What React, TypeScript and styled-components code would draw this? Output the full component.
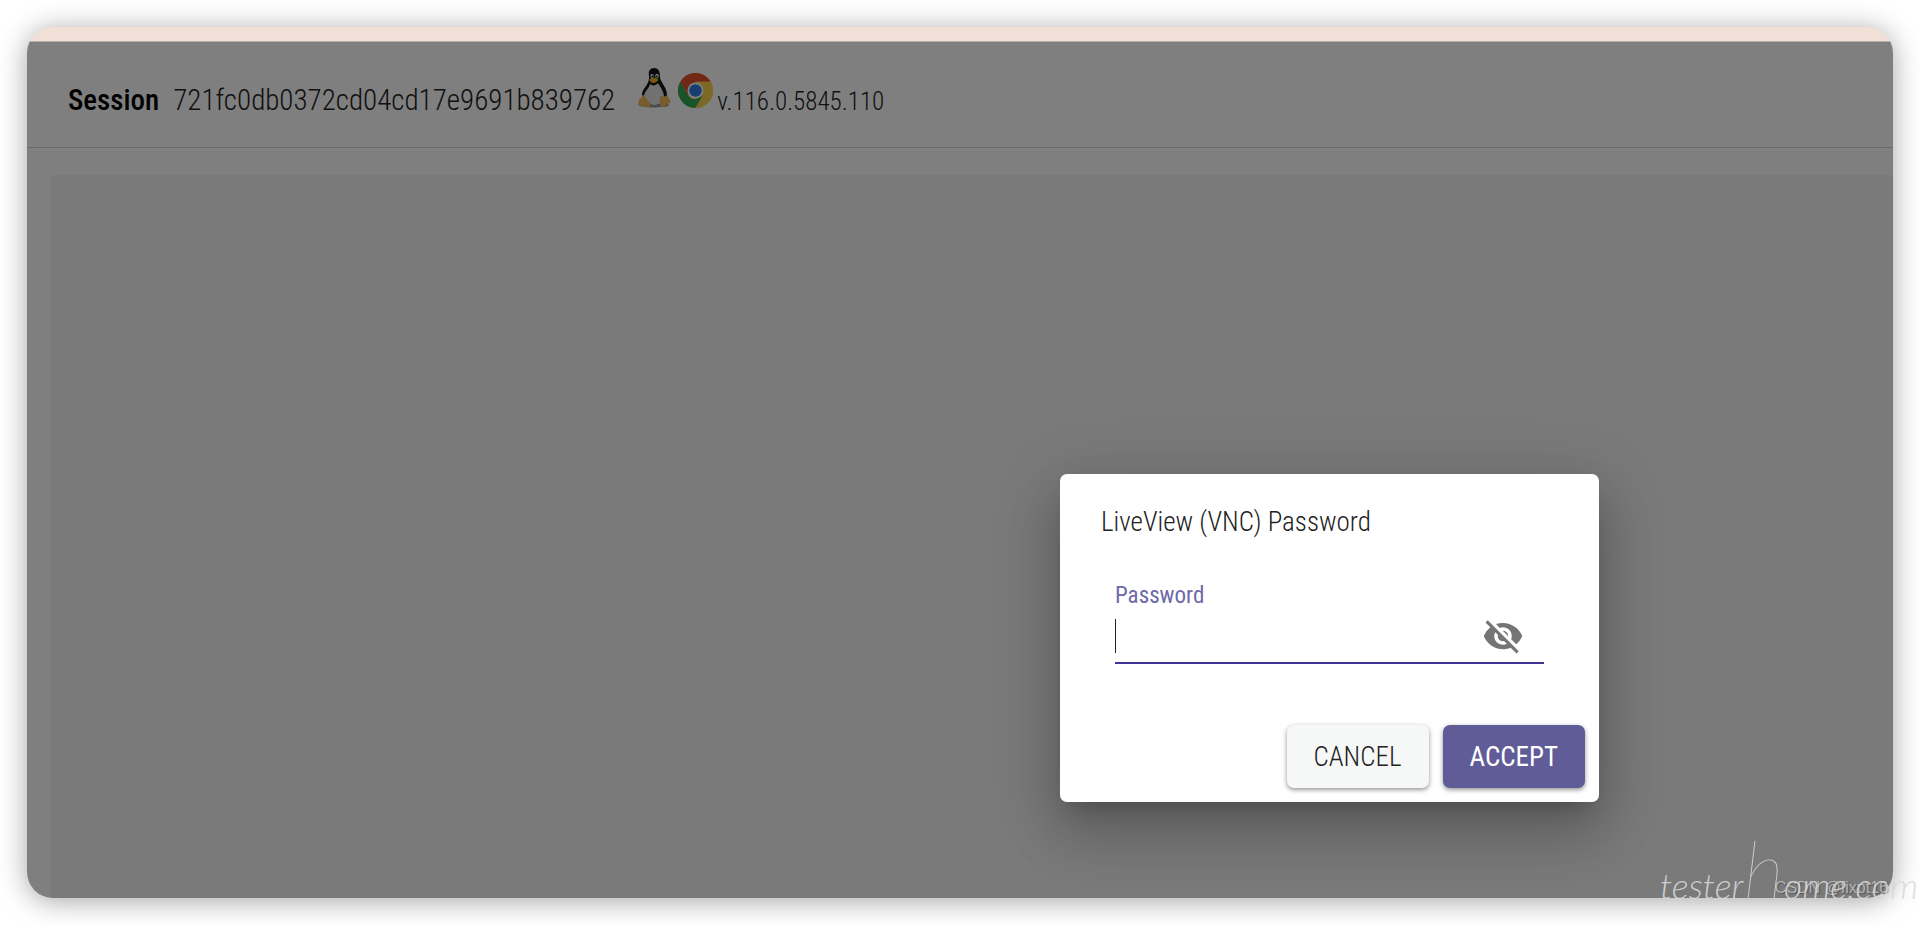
import React from "react";
import styled, { createGlobalStyle } from "styled-components";
import { MdVisibilityOff } from "react-icons/md";

const GlobalStyle = createGlobalStyle`
  *, *::before, *::after { box-sizing: border-box; }
  body {
    margin: 0;
    background: #fff;
    color: #000;
    font-family: "Roboto Condensed", "Liberation Sans", sans-serif;
    font-weight: 300;
  }
`;

const Page = styled.div`
  position: relative;
  display: flex;
  min-height: 100vh;
  padding: 27px;
  overflow: hidden;
`;

const Frame = styled.div`
  flex: 1;
  display: flex;
  flex-direction: column;
  border-radius: 26px;
  overflow: hidden;
  background: #f1dfd8;
  box-shadow: 0 3px 28px rgba(0, 0, 0, 0.36);
`;

const TopBand = styled.div`
  height: 15px;
  border-bottom: 1px solid #b9b0ad;
`;

const Workspace = styled.div`
  position: relative;
  flex: 1;
  display: flex;
  flex-direction: column;
  background: #fff;
`;

const Header = styled.header`
  display: flex;
  align-items: baseline;
  height: 106px;
  padding: 38px 41px 0;
  border-bottom: 1px solid #d4d4d4;
  line-height: 40px;
`;

const SessionTitle = styled.h1`
  margin: 0 14px 0 0;
  font-size: 29px;
  font-weight: 500;
`;

const SessionId = styled.span`
  margin-right: 22px;
  color: #222;
  font-size: 29px;
`;

const Platform = styled.span`
  display: flex;
  align-items: flex-end;
  align-self: flex-start;
  gap: 7px;
  margin: -12px 4px 0 0;
`;

const Version = styled.span`
  color: #222;
  font-size: 25px;
`;

const Screen = styled.main`
  flex: 1;
  margin: 27px 0 0 24px;
  background: #f5f5f5;
`;

const Backdrop = styled.div`
  position: absolute;
  inset: 0;
  display: flex;
  align-items: flex-end;
  justify-content: flex-end;
  padding: 0 294px 96px 0;
  background: rgba(0, 0, 0, 0.5);
`;

const Dialog = styled.form`
  display: flex;
  flex-direction: column;
  width: 539px;
  border-radius: 7px;
  background: #fff;
  box-shadow:
    0 15px 21px -10px rgba(0, 0, 0, 0.2),
    0 33px 53px 4px rgba(0, 0, 0, 0.14),
    0 12px 64px 11px rgba(0, 0, 0, 0.12);
`;

const DialogTitle = styled.h2`
  margin: 0;
  padding: 28px 41px;
  color: #222;
  font-size: 27px;
  font-weight: 300;
  line-height: 40px;
`;

const Field = styled.div`
  margin: 0 55px;
  padding-top: 12px;
`;

const FieldLabel = styled.label`
  display: block;
  color: #6d69a8;
  font-size: 23px;
  line-height: 28px;
  font-weight: 400;
`;

const InputRow = styled.div`
  display: flex;
  align-items: center;
  height: 54px;
  padding-right: 20px;
  border-bottom: 2px solid #3f3599;
`;

const Caret = styled.span`
  width: 1px;
  height: 34px;
  background: #222;
`;

const PasswordInput = styled.input`
  flex: 1;
  min-width: 0;
  padding: 0;
  border: 0;
  outline: 0;
  background: transparent;
  font: inherit;
  font-size: 27px;
`;

const IconButton = styled.button`
  display: flex;
  padding: 0;
  border: 0;
  background: none;
  color: #757575;
  cursor: pointer;
`;

const Actions = styled.div`
  display: flex;
  justify-content: flex-end;
  gap: 14px;
  padding: 61px 14px 14px;
`;

const ActionButton = styled.button<{ $primary?: boolean }>`
  height: 63px;
  padding: 0 27px;
  border: 0;
  border-radius: 7px;
  background: ${(p) => (p.$primary ? "#605c98" : "#f6f8f8")};
  color: ${(p) => (p.$primary ? "#fff" : "#222")};
  font: ${(p) => (p.$primary ? 400 : 300)} 27px "Roboto Condensed", "Liberation Sans", sans-serif;
  box-shadow: 0 2px 4px rgba(0, 0, 0, 0.35), 0 1px 7px rgba(0, 0, 0, 0.1);
  cursor: pointer;
`;

const Watermark = styled.div`
  position: absolute;
  right: 2px;
  bottom: 15px;
  color: rgba(216, 216, 216, 0.9);
  font: italic 300 36px/50px Lato, sans-serif;
  white-space: nowrap;
`;

const TallLetter = styled.span`
  font-size: 80px;
  font-weight: 100;
`;

const Credit = styled.div`
  position: absolute;
  right: 32px;
  bottom: 27px;
  color: #b4b4b4;
  font: 16px/20px "Liberation Sans", sans-serif;
  text-shadow: 1px 1px 1px #555;
`;

function Penguin() {
  return (
    <svg width="34" height="40" viewBox="0 0 34 40" aria-label="Linux">
      <ellipse cx="17" cy="37" rx="15" ry="2.500" fill="#999" />
      <path d="M12 8C11 3 13 0 17 0c5 0 6 4 6 9 0 5 7 10 7 18 0 6-3 10-13 10S5 34 5 27c0-7 8-10 7-19z" fill="#151515" />
      <path d="M13 16c2 2 6 2 8-1 2 4 6 8 6 14 0 6-4 8-10 8s-10-3-10-8c0-6 5-8 6-13z" fill="#e2e2e2" />
      <ellipse cx="15" cy="8" rx="1.600" ry="2.200" fill="#ccc" />
      <ellipse cx="20" cy="8" rx="1.900" ry="2.300" fill="#ccc" />
      <circle cx="15.300" cy="8.500" r=".8" />
      <circle cx="19.700" cy="8.500" r=".8" />
      <path d="M12.500 11.500c2-2.500 6-2.500 9 0-1 2-3 3.500-5 3.500s-4-1.500-4-3.500z" fill="#efb22a" />
      <path d="M6 27c2 0 4 5 7 8 1 3-1 5-4 4-3-1-8-1-8-3 0-1 1-2 1-4 1-2 2-1 2-2 1-1 1-3 2-3z" fill="#f0b85c" />
      <path d="M23 29c1-2 5 1 7-2 1 0 1 3 4 6 0 2-4 3-6 5-2 2-5 1-5-1-1-3 0-5 0-8z" fill="#f0b85c" />
    </svg>
  );
}

function Chrome() {
  return (
    <svg width="35" height="35" viewBox="0 0 48 48" aria-label="Chrome">
      <circle cx="24" cy="24" r="24" fill="#fbd04b" />
      <path d="M24 24 13.600 30 3.200 12A24 24 0 0 1 44.800 12H24z" fill="#e2502f" />
      <path d="M3.200 12 13.600 30A12 12 0 0 0 24 36l10.400-6L24 48A24 24 0 0 1 3.200 12z" fill="#35a452" />
      <path d="M24 12h20.800A24 24 0 0 1 24 48l10.400-18A12 12 0 0 0 24 12z" fill="#fbd04b" />
      <circle cx="24" cy="24" r="11" fill="#fff" />
      <circle cx="24" cy="24" r="8.500" fill="#2f7de1" />
    </svg>
  );
}

export default function App() {
  const [visible, setVisible] = React.useState(false);
  const [password, setPassword] = React.useState("");
  return (
    <>
      <GlobalStyle />
      <Page>
        <Frame>
          <TopBand />
          <Workspace>
            <Header>
              <SessionTitle>Session</SessionTitle>
              <SessionId>721fc0db0372cd04cd17e9691b839762</SessionId>
              <Platform>
                <Penguin />
                <Chrome />
              </Platform>
              <Version>v.116.0.5845.110</Version>
            </Header>
            <Screen />
            <Backdrop>
              <Dialog role="dialog" aria-labelledby="dialog-title" onSubmit={(e) => e.preventDefault()}>
                <DialogTitle id="dialog-title">LiveView (VNC) Password</DialogTitle>
                <Field>
                  <FieldLabel htmlFor="password">Password</FieldLabel>
                  <InputRow>
                    {password === "" && <Caret />}
                    <PasswordInput
                      id="password"
                      type={visible ? "text" : "password"}
                      value={password}
                      onChange={(e) => setPassword(e.target.value)}
                    />
                    <IconButton type="button" aria-label="Toggle password visibility" onClick={() => setVisible(!visible)}>
                      <MdVisibilityOff size={42} />
                    </IconButton>
                  </InputRow>
                </Field>
                <Actions>
                  <ActionButton type="button">CANCEL</ActionButton>
                  <ActionButton type="submit" $primary>ACCEPT</ActionButton>
                </Actions>
              </Dialog>
            </Backdrop>
          </Workspace>
        </Frame>
        <Credit>CSDN @fixpt16</Credit>
        <Watermark>
          tester<TallLetter>h</TallLetter>ome.com
        </Watermark>
      </Page>
    </>
  );
}
